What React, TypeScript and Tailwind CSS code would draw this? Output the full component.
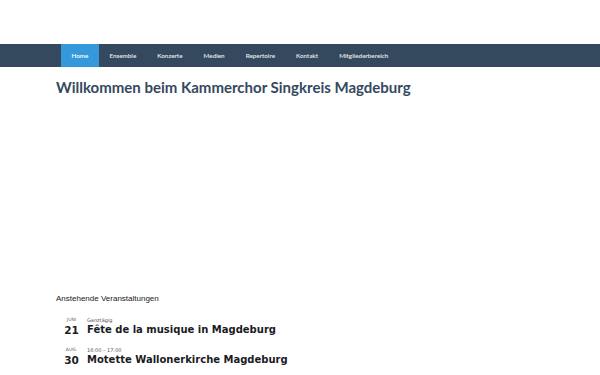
import React from "react";

const navItems = ["Home", "Ensemble", "Konzerte", "Medien", "Repertoire", "Kontakt", "Mitgliederbereich"];

const events = [
  { month: "JUNI", day: "21", time: "Ganztägig", title: "Fête de la musique in Magdeburg" },
  { month: "AUG.", day: "30", time: "16:00 – 17:00", title: "Motette Wallonerkirche Magdeburg" },
];

export default function App() {
  return (
    <div className="w-[600px] h-[375px] overflow-hidden bg-white">
      <div className="h-[44px]" />
      <nav className="h-[23px] bg-[#34495e] flex px-[61px] font-['Lato',sans-serif]">
        {navItems.map((item, i) => (
          <a
            key={item}
            className={`flex items-center px-[10.5px] text-[6.3px] font-semibold text-[#e8edf2] ${
              i === 0 ? "bg-[#3498db] text-white" : ""
            }`}
          >
            {item}
          </a>
        ))}
      </nav>
      <main className="px-[56px]">
        <h1 className="mt-[10px] text-[15px] leading-[20px] font-bold text-[#34495e] font-['Lato',sans-serif]">
          Willkommen beim Kammerchor Singkreis Magdeburg
        </h1>
        <div className="h-[197px]" />
        <h2 className="text-[8px] leading-[10px] text-[#222] font-['Liberation_Sans',sans-serif]">
          Anstehende Veranstaltungen
        </h2>
        <ul className="mt-[13px] flex flex-col gap-[10px] font-['DejaVu_Sans',sans-serif]">
          {events.map((e) => (
            <li key={e.day} className="flex gap-[8px] pl-[8px]">
              <div className="w-[15px] flex flex-col items-center">
                <span className="text-[4.5px] leading-[6px] text-[#666]">{e.month}</span>
                <span className="text-[10.5px] leading-[14px] font-bold text-[#1b1b24]">{e.day}</span>
              </div>
              <div className="flex flex-col">
                <span className="text-[5px] leading-[6px] text-[#555]">{e.time}</span>
                <span className="text-[10px] leading-[14px] font-bold text-[#1b1b24]">{e.title}</span>
              </div>
            </li>
          ))}
        </ul>
      </main>
    </div>
  );
}
